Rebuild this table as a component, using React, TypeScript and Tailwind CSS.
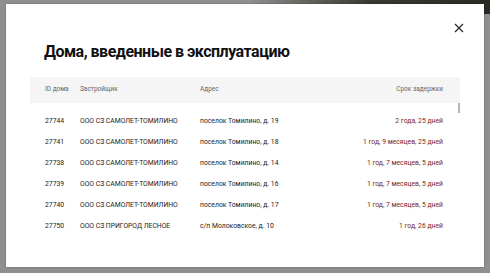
import React from "react";

const rows = [
  { id: "27744", dev: "ООО СЗ САМОЛЕТ-ТОМИЛИНО", addr: "поселок Томилино, д. 19", delay: "2 года, 25 дней" },
  { id: "27741", dev: "ООО СЗ САМОЛЕТ-ТОМИЛИНО", addr: "поселок Томилино, д. 18", delay: "1 год, 9 месяцев, 25 дней" },
  { id: "27738", dev: "ООО СЗ САМОЛЕТ-ТОМИЛИНО", addr: "поселок Томилино, д. 14", delay: "1 год, 7 месяцев, 5 дней" },
  { id: "27739", dev: "ООО СЗ САМОЛЕТ-ТОМИЛИНО", addr: "поселок Томилино, д. 16", delay: "1 год, 7 месяцев, 5 дней" },
  { id: "27740", dev: "ООО СЗ САМОЛЕТ-ТОМИЛИНО", addr: "поселок Томилино, д. 17", delay: "1 год, 7 месяцев, 5 дней" },
  { id: "27750", dev: "ООО СЗ ПРИГОРОД ЛЕСНОЕ", addr: "с/п Молоковское, д. 10", delay: "1 год, 26 дней" },
];

const App = () => {
  return (
    <div className="relative w-[490px] h-[273px] overflow-hidden bg-[#8f8f8f] font-['Roboto',sans-serif]">
      {/* dark photo strip behind the overlay */}
      <div className="absolute right-0 top-0 w-[240px] h-[14px] bg-gradient-to-r from-[#8f8f8f] via-[#3a3a30] to-[#2a2a24]" />
      <div className="relative px-[6px] pt-[4px]">
        <div className="relative h-[263px] bg-white shadow-[0_0_2px_rgba(0,0,0,0.3)]">
          <button className="absolute right-[19px] top-[18px] w-[12px] h-[12px] flex items-center justify-center text-[#333]">
            <svg width="10" height="10" viewBox="0 0 10 10" fill="none" stroke="currentColor" strokeWidth="1.4">
              <path d="M1 1L9 9M9 1L1 9" />
            </svg>
          </button>
          <h1 className="pl-[38px] pt-[38px] text-[16px] leading-[20px] font-bold text-[#111] tracking-[-0.5px]">
            Дома, введенные в эксплуатацию
          </h1>
          <div className="mx-[24px] mt-[15px] relative">
            <div className="flex items-center h-[26px] bg-[#f5f5f5] text-[6.5px] text-[#666]">
              <div className="w-[50px] pl-[15px]">ID дома</div>
              <div className="w-[120px]">Застройщик</div>
              <div className="flex-1">Адрес</div>
              <div className="pr-[17px] text-right">Срок задержки</div>
            </div>
            <div className="absolute right-[0px] top-[26px] w-[2px] h-[10px] bg-[#b5b5b5]" />
            <div className="pt-[8px] text-[6.8px] text-[#222]">
              {rows.map((r) => (
                <div key={r.id} className="flex items-center h-[21px]">
                  <div className="w-[50px] pl-[15px]">{r.id}</div>
                  <div className="w-[120px]">{r.dev}</div>
                  <div className="flex-1">{r.addr}</div>
                  <div className="pr-[17px] text-right text-[#7a1f23]">{r.delay}</div>
                </div>
              ))}
            </div>
          </div>
        </div>
      </div>
    </div>
  );
};

export default App;
